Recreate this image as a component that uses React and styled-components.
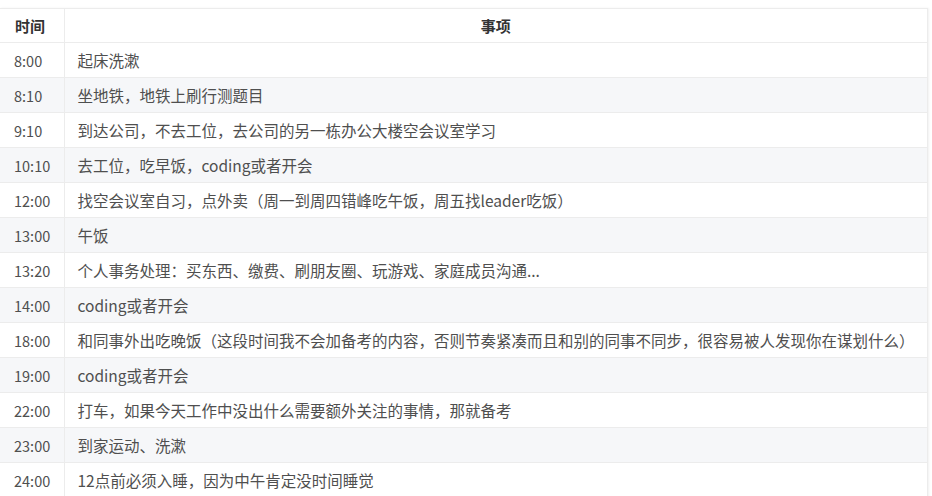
import React from "react";
import styled, { createGlobalStyle } from "styled-components";

const GlobalStyle = createGlobalStyle`
  body {
    margin: 0;
    background: #ffffff;
    font-family: "Noto Sans CJK SC", "Noto Sans", sans-serif;
  }
`;

const Page = styled.div`
  width: 932px;
  height: 496px;
  overflow: hidden;
  padding-top: 8px;
  box-sizing: border-box;
`;

const Table = styled.table`
  width: 928px;
  border-collapse: collapse;
  table-layout: fixed;
  color: #4f4f4f;
  font-size: 15.5px;
  box-shadow: 1px 0 2px rgba(0, 0, 0, 0.06);
`;

const HeadCell = styled.th`
  height: 33px;
  padding: 0 15px;
  font-size: 15px;
  font-weight: 700;
  color: #333;
  text-align: ${(p) => p.align || "left"};
  border: 1px solid #ececec;
  border-left: none;
  background: #ffffff;
`;

const Row = styled.tr`
  background: ${(p) => (p.$striped ? "#f6f7f9" : "#ffffff")};
`;

const Cell = styled.td`
  height: 34px;
  padding: 0 13px;
  border: 1px solid #ececec;
  border-left: none;
  white-space: nowrap;
`;

const TimeCell = styled(Cell)`
  padding: 0 14px;
  font-size: 14.5px;
`;

const rows = [
  ["8:00", "起床洗漱"],
  ["8:10", "坐地铁，地铁上刷行测题目"],
  ["9:10", "到达公司，不去工位，去公司的另一栋办公大楼空会议室学习"],
  ["10:10", "去工位，吃早饭，coding或者开会"],
  ["12:00", "找空会议室自习，点外卖（周一到周四错峰吃午饭，周五找leader吃饭）"],
  ["13:00", "午饭"],
  ["13:20", "个人事务处理：买东西、缴费、刷朋友圈、玩游戏、家庭成员沟通..."],
  ["14:00", "coding或者开会"],
  ["18:00", "和同事外出吃晚饭（这段时间我不会加备考的内容，否则节奏紧凑而且和别的同事不同步，很容易被人发现你在谋划什么）"],
  ["19:00", "coding或者开会"],
  ["22:00", "打车，如果今天工作中没出什么需要额外关注的事情，那就备考"],
  ["23:00", "到家运动、洗漱"],
  ["24:00", "12点前必须入睡，因为中午肯定没时间睡觉"],
];

const App = () => {
  return (
    <Page>
      <GlobalStyle />
      <Table>
        <colgroup>
          <col style={{ width: 64 }} />
          <col />
        </colgroup>
        <thead>
          <tr>
            <HeadCell>时间</HeadCell>
            <HeadCell align="center">事项</HeadCell>
          </tr>
        </thead>
        <tbody>
          {rows.map(([time, item], i) => (
            <Row key={time} $striped={i % 2 === 1}>
              <TimeCell>{time}</TimeCell>
              <Cell>{item}</Cell>
            </Row>
          ))}
        </tbody>
      </Table>
    </Page>
  );
};

export default App;
